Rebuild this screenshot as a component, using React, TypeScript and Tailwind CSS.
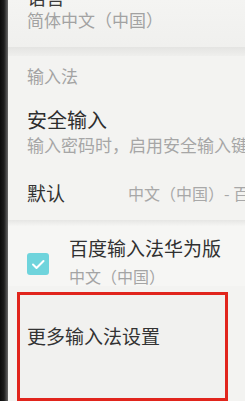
const font = { fontFamily: '"Noto Sans CJK SC", "Noto Sans", sans-serif' }

function CheckIcon() {
  return (
    <svg viewBox="0 0 22 22" className="h-[22px] w-[22px]">
      <rect x="0" y="0" width="22" height="22" rx="3" fill="#6fd4dc" />
      <path d="M6 11.5l3.5 3.5L16.5 8" fill="none" stroke="#ffffff" strokeWidth="2" strokeLinecap="round" strokeLinejoin="round" />
    </svg>
  )
}

export default function App() {
  return (
    <div className="flex h-[401px] w-[245px] overflow-hidden bg-[#f3f3f1]" style={font}>
      <div className="w-[8px] shrink-0 bg-gradient-to-r from-[#0b0b0b] via-[#1c1c1c] to-[#6a6a6a]" />

      <div className="flex min-w-0 flex-1 flex-col">
        <div className="pl-[19px] bg-gradient-to-b from-[#f4f4f2] to-[#f0f0ee]">
          <p className="-mt-[13px] whitespace-nowrap text-[19px] leading-[19px] text-[#3a3a3a]">语言</p>
          <p className="mt-[4px] whitespace-nowrap text-[17px] leading-[20px] text-[#a2a2a2]">简体中文（中国）</p>
          <div className="h-[17px]" />
        </div>

        <div className="h-[10px] bg-gradient-to-b from-[#e4e4e2] to-[#efefed]" />

        <div className="pl-[19px]">
          <p className="mt-[10px] whitespace-nowrap text-[17px] leading-[20px] text-[#a3a3a3]">输入法</p>

          <p className="mt-[22px] whitespace-nowrap text-[20px] leading-[24px] text-[#2e2e2e]">安全输入</p>
          <p className="mt-[3px] whitespace-nowrap text-[17px] leading-[20px] text-[#a6a6a6]">
            输入密码时，启用安全输入键盘
          </p>

          <div className="mt-[26px] flex items-center">
            <p className="w-[101px] shrink-0 whitespace-nowrap text-[19px] leading-[24px] text-[#333333]">默认</p>
            <p className="whitespace-nowrap text-[16px] leading-[24px] text-[#a8a8a8]">中文（中国）- 百度输入法华为版</p>
          </div>
        </div>

        <div className="mt-[15px] h-[6px] bg-gradient-to-b from-[#e6e6e4] to-[#f5f5f3]" />

        <div className="flex items-center pl-[19px] bg-[#f6f6f4]">
          <div className="mt-[16px] shrink-0">
            <CheckIcon />
          </div>
          <div className="ml-[20px] mt-[10px]">
            <p className="whitespace-nowrap text-[19px] leading-[24px] text-[#303030]">百度输入法华为版</p>
            <p className="mt-[6px] whitespace-nowrap text-[16px] leading-[20px] text-[#a4a4a4]">中文（中国）</p>
          </div>
        </div>

        <div className="mt-[6px] ml-[9px] h-[109px] w-[211px] shrink-0 border-[3px] border-[#e1251c] bg-[#f1f1ef] pl-[7px]">
          <p className="mt-[29px] whitespace-nowrap text-[19px] leading-[24px] text-[#333333]">更多输入法设置</p>
        </div>
      </div>
    </div>
  )
}
